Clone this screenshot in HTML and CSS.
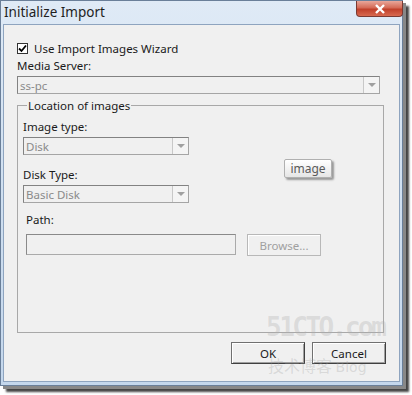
FILE: index.html
```html
<!DOCTYPE html>
<html>
<head>
<meta charset="utf-8">
<link rel="stylesheet" href="styles.css">
</head>
<body>
<div class="window">
  <div class="titlebar">
    <span class="title">Initialize Import</span>
    <div class="close"><svg width="12" height="10" viewBox="0 0 12 10"><path d="M2 1 L10 9 M10 1 L2 9" stroke="#fff" stroke-width="2.4"/></svg></div>
  </div>
  <div class="client">
    <label class="check"><span class="box"><svg width="9" height="9" viewBox="0 0 9 9"><path d="M1 4.5 L3.5 7 L8 1.5" fill="none" stroke="#000" stroke-width="1.8"/></svg></span>Use Import Images Wizard</label>
    <div class="label ms">Media Server:</div>
    <div class="combo wide"><span>ss-pc</span><span class="arrow"><i></i></span></div>
    <fieldset class="group">
      <legend>Location of images</legend>
      <div class="label it">Image type:</div>
      <div class="combo small"><span>Disk</span><span class="arrow"><i></i></span></div>
      <div class="label dt">Disk Type:</div>
      <div class="combo small"><span>Basic Disk</span><span class="arrow"><i></i></span></div>
      <div class="label path">Path:</div>
      <div class="pathrow">
        <div class="input"></div>
        <div class="btn disabled">Browse...</div>
      </div>
      <div class="tip">image</div>
    </fieldset>
    <div class="buttons">
      <div class="btn ok">OK</div>
      <div class="btn">Cancel</div>
    </div>
    <div class="wm1">51CTO.com</div>
    <div class="wm2">技术博客 <span>Blog</span></div>
  </div>
</div>
</body>
</html>
```
FILE: styles.css
```css
html, body { margin: 0; padding: 0; background: #ffffff; }
body { width: 412px; height: 395px; overflow: hidden; font-family: "Noto Sans", "Open Sans", sans-serif; font-size: 11.5px; color: #1a1a1a; }
.window {
  width: 403px; height: 386px;
  background: linear-gradient(180deg, #dfeaf6 0%, #d2e1f1 40%, #c4d7ec 100%);
  border: 1px solid #6a7f99;
  box-sizing: border-box;
  box-shadow: 3px 3px 0 #888, 6px 6px 2px #444;
  display: flex; flex-direction: column;
  position: relative;
}
.titlebar { height: 23px; display: flex; align-items: flex-start; justify-content: space-between; }
.title { font-size: 13.5px; color: #1e1e1e; padding: 2px 0 0 3px; }
.close {
  width: 45px; height: 15px;
  background: linear-gradient(180deg, #e9a79a 0%, #d46a56 45%, #c0402a 55%, #d86a50 100%);
  border: 1px solid #7a3a32; border-top: none;
  border-radius: 0 0 4px 4px;
  display: flex; align-items: center; justify-content: center;
  margin-right: -1px;
}
.client {
  flex: 1; margin: 0 2px 3px 2px;
  background: #f0f0f0;
  border: 1px solid #8ea4bf;
  position: relative;
  padding: 0 0 0 13px;
  overflow: hidden;
}
.check { display: flex; align-items: center; margin-top: 16px; height: 14px; }
.box { width: 11px; height: 11px; border: 1px solid #333; background: #fff; margin-right: 6px; display: flex; align-items: center; justify-content: center; box-sizing: border-box; }
.label { height: 14px; line-height: 14px; }
.ms { margin-top: 4px; }
.combo {
  display: flex; align-items: center; justify-content: space-between;
  height: 18px; box-sizing: border-box;
  border: 1px solid #a5a5a5; border-top-color: #828282; border-left-color: #828282;
  background: #f0f0f0; color: #8a8a8a; padding-left: 2px;
}
.combo.wide { width: 363px; margin-top: 3px; }
.combo.small { width: 166px; margin-top: 3px; }
.arrow { width: 15px; height: 16px; border-left: 1px solid #c8c8c8; display: flex; align-items: center; justify-content: center; background: #f4f4f4; }
.arrow i { width: 0; height: 0; border-left: 4px solid transparent; border-right: 4px solid transparent; border-top: 4px solid #a0a0a0; }
.group {
  margin: 4px 0 0 0; width: 367px; height: 235px; box-sizing: border-box;
  border: 1px solid #a8a8a8; padding: 3px 5px 0 5px;
  position: relative;
}
.group legend { padding: 0 1px; margin-left: 4px; color: #1a1a1a; }
.it { margin-top: 4px; }
.dt { margin-top: 13px; }
.path { margin-top: 10px; margin-left: 3px; }
.pathrow { display: flex; margin-top: 7px; margin-left: 3px; gap: 11px; }
.input { width: 210px; height: 21px; box-sizing: border-box; border: 1px solid #aaa; border-top-color: #8a8a8a; border-left-color: #8a8a8a; background: #f0f0f0; }
.btn {
  width: 74px; height: 22px; box-sizing: border-box;
  border: 1px solid #707070; border-right-color: #404040; border-bottom-color: #404040;
  background: #f0f0f0; display: flex; align-items: center; justify-content: center;
  box-shadow: inset 1px 1px 0 #fff, inset -1px -1px 0 #a0a0a0;
}
.btn.disabled { color: #a0a0a0; border-color: #b8b8b8; box-shadow: inset 1px 1px 0 #fff; }
.tip {
  position: absolute; left: 266px; top: 46px;
  width: 48px; height: 19px; box-sizing: border-box;
  border: 1px solid #b0b0b0; border-radius: 2px;
  background: linear-gradient(180deg, #ffffff, #e6e6e6);
  color: #5a5a5a; font-size: 12px; display: flex; align-items: center; justify-content: center;
  box-shadow: 2px 2px 2px #999;
}
.buttons { display: flex; gap: 7px; margin: 9px 0 0 214px; }
.wm1 { position: absolute; left: 262px; top: 287px; font-size: 26px; font-weight: bold; color: rgba(175,175,175,0.32); font-family: "DejaVu Sans Mono", monospace; letter-spacing: -2.5px; pointer-events: none; }
.wm2 { position: absolute; left: 264px; top: 328px; font-size: 16px; color: rgba(160,160,160,0.3); font-family: "Noto Sans CJK SC", sans-serif; pointer-events: none; }
.wm2 span { font-family: "DejaVu Sans", sans-serif; font-size: 14px; }
```
